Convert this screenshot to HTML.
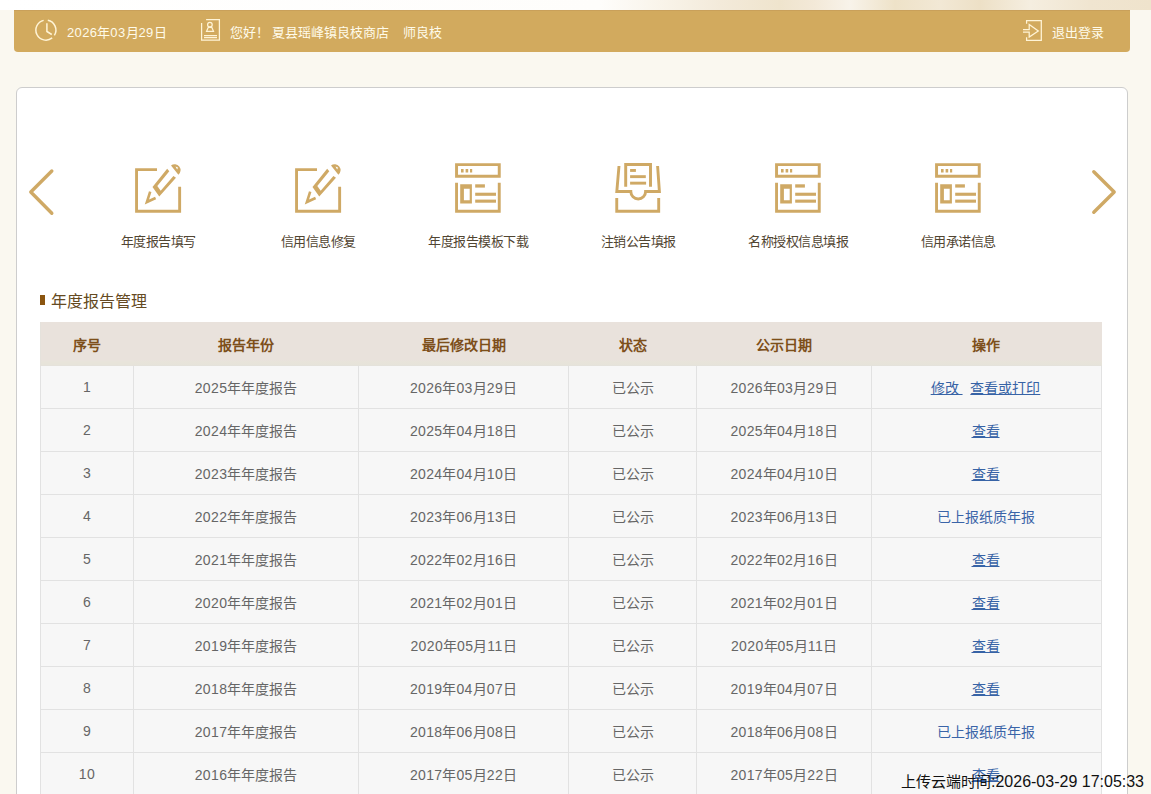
<!DOCTYPE html>
<html lang="zh-CN">
<head>
<meta charset="utf-8">
<style>
*{margin:0;padding:0;box-sizing:border-box;}
html,body{width:1151px;height:794px;overflow:hidden;}
body{position:relative;background:#faf8f0;font-family:"Liberation Sans",sans-serif;}
.topstrip{position:absolute;left:0;top:0;width:1151px;height:10px;background:linear-gradient(90deg,#ffffff 0px,#fefdfb 600px,#f9f4ea 660px,#f3eada 720px,#efe4cd 780px,#f3e9d8 815px,#f8f3ea 850px,#eee2c8 895px,#f2e8d5 940px,#ede0c6 980px,#f5eee0 1030px,#f0e5d0 1090px,#efe3cc 1151px);}
.bar{position:absolute;left:14px;top:10px;width:1116px;height:42px;background:#d2aa5e;border-radius:0 0 4px 4px;box-shadow:inset 0 1px 0 #c9a05a;}
.bar .t{position:absolute;top:2px;height:42px;line-height:42px;color:#fffbea;font-size:13px;font-weight:500;white-space:nowrap;}
.panel{position:absolute;left:16px;top:87px;width:1112px;height:800px;background:#fff;border:1px solid #cdcdcd;border-radius:6px;}
.lbl{position:absolute;top:230.5px;width:160px;text-align:center;font-size:13px;letter-spacing:-0.5px;text-indent:0.5px;color:#514532;white-space:nowrap;}
.sec{position:absolute;left:40px;top:295px;width:5px;height:10px;background:#8b5510;}
.sectitle{position:absolute;left:51px;top:287.5px;font-size:16px;color:#654a22;white-space:nowrap;}
table{position:absolute;left:40px;top:322px;width:1061px;border-collapse:collapse;table-layout:fixed;}
th{height:44px;background:linear-gradient(to bottom,#e9e2dc 0px,#e9e2dc 38px,#e8e4da 40px,#e6e3da 43px,#e3e1dc 44px);color:#7d4f1a;font-weight:bold;font-size:14px;text-align:center;border:none;}
td{height:43px;background:#f7f7f7;color:#666;font-size:14px;text-align:center;border:1px solid #e2e2e2;}
tr.r1 td{border-top:0;height:42px;}
th:last-child,td:last-child{padding-right:2px;}
th:first-child{border-left:1px solid #e5e2dc;}
td a{color:#3763a6;text-decoration:underline;}
td span.b{color:#3a64a8;}
.wm{position:absolute;left:901px;top:770px;font-size:16px;color:#111;white-space:nowrap;}
i.d{font-style:normal;letter-spacing:.35px;}
svg.ov{position:absolute;left:0;top:0;}
</style>
</head>
<body>
<div class="topstrip"></div>
<div class="bar"></div>
<div class="bar" style="background:none;box-shadow:none">
  <span class="t" style="left:53px"><i class="d">2026</i>年<i class="d">03</i>月<i class="d">29</i>日</span>
  <span class="t" style="left:216px">您好！</span>
  <span class="t" style="left:258px">夏县瑶峰镇良枝商店</span>
  <span class="t" style="left:389px">师良枝</span>
  <span class="t" style="left:1038px">退出登录</span>
</div>
<div class="panel"></div>

<div class="lbl" style="left:78px">年度报告填写</div>
<div class="lbl" style="left:238px">信用信息修复</div>
<div class="lbl" style="left:398px">年度报告模板下载</div>
<div class="lbl" style="left:558px">注销公告填报</div>
<div class="lbl" style="left:718px">名称授权信息填报</div>
<div class="lbl" style="left:878px">信用承诺信息</div>

<div class="sec"></div>
<div class="sectitle">年度报告管理</div>

<table>
<colgroup><col style="width:93px"><col style="width:225px"><col style="width:210px"><col style="width:128px"><col style="width:175px"><col style="width:230px"></colgroup>
<tr><th>序号</th><th>报告年份</th><th>最后修改日期</th><th>状态</th><th>公示日期</th><th>操作</th></tr>
<tr class="r1"><td><i class="d">1</i></td><td><i class="d">2025</i>年年度报告</td><td><i class="d">2026</i>年<i class="d">03</i>月<i class="d">29</i>日</td><td>已公示</td><td><i class="d">2026</i>年<i class="d">03</i>月<i class="d">29</i>日</td><td><a>修改 </a>&nbsp;&nbsp;<a>查看或打印</a></td></tr>
<tr><td><i class="d">2</i></td><td><i class="d">2024</i>年年度报告</td><td><i class="d">2025</i>年<i class="d">04</i>月<i class="d">18</i>日</td><td>已公示</td><td><i class="d">2025</i>年<i class="d">04</i>月<i class="d">18</i>日</td><td><a>查看</a></td></tr>
<tr><td><i class="d">3</i></td><td><i class="d">2023</i>年年度报告</td><td><i class="d">2024</i>年<i class="d">04</i>月<i class="d">10</i>日</td><td>已公示</td><td><i class="d">2024</i>年<i class="d">04</i>月<i class="d">10</i>日</td><td><a>查看</a></td></tr>
<tr><td><i class="d">4</i></td><td><i class="d">2022</i>年年度报告</td><td><i class="d">2023</i>年<i class="d">06</i>月<i class="d">13</i>日</td><td>已公示</td><td><i class="d">2023</i>年<i class="d">06</i>月<i class="d">13</i>日</td><td><span class="b">已上报纸质年报</span></td></tr>
<tr><td><i class="d">5</i></td><td><i class="d">2021</i>年年度报告</td><td><i class="d">2022</i>年<i class="d">02</i>月<i class="d">16</i>日</td><td>已公示</td><td><i class="d">2022</i>年<i class="d">02</i>月<i class="d">16</i>日</td><td><a>查看</a></td></tr>
<tr><td><i class="d">6</i></td><td><i class="d">2020</i>年年度报告</td><td><i class="d">2021</i>年<i class="d">02</i>月<i class="d">01</i>日</td><td>已公示</td><td><i class="d">2021</i>年<i class="d">02</i>月<i class="d">01</i>日</td><td><a>查看</a></td></tr>
<tr><td><i class="d">7</i></td><td><i class="d">2019</i>年年度报告</td><td><i class="d">2020</i>年<i class="d">05</i>月<i class="d">11</i>日</td><td>已公示</td><td><i class="d">2020</i>年<i class="d">05</i>月<i class="d">11</i>日</td><td><a>查看</a></td></tr>
<tr><td><i class="d">8</i></td><td><i class="d">2018</i>年年度报告</td><td><i class="d">2019</i>年<i class="d">04</i>月<i class="d">07</i>日</td><td>已公示</td><td><i class="d">2019</i>年<i class="d">04</i>月<i class="d">07</i>日</td><td><a>查看</a></td></tr>
<tr><td><i class="d">9</i></td><td><i class="d">2017</i>年年度报告</td><td><i class="d">2018</i>年<i class="d">06</i>月<i class="d">08</i>日</td><td>已公示</td><td><i class="d">2018</i>年<i class="d">06</i>月<i class="d">08</i>日</td><td><span class="b">已上报纸质年报</span></td></tr>
<tr><td><i class="d">10</i></td><td><i class="d">2016</i>年年度报告</td><td><i class="d">2017</i>年<i class="d">05</i>月<i class="d">22</i>日</td><td>已公示</td><td><i class="d">2017</i>年<i class="d">05</i>月<i class="d">22</i>日</td><td><a>查看</a></td></tr>
</table>

<svg class="ov" width="1151" height="794" viewBox="0 0 1151 794" fill="none" stroke-linecap="butt">
<g transform="translate(0 0)">
<path d="M157 169.65 H136.55 V211.25 H179.65 V186.8" stroke="#cfa965" stroke-width="2.9" fill="none"/>
<path d="M167.15 168.7 L152.5 186.9 L159.25 196.5 L176 177.8 L173.4 175.9 L160.7 190.7 L157.3 185.9 L169.3 171.3 Z" fill="#cfa965"/>
<path d="M171 165.6 A5.86 5.86 0 0 1 178.4 174.7 Z" fill="#cfa965"/>
<path d="M175.5 166.4 L178 167.6 L177.2 169.4 Z" fill="#fff"/>
<path d="M150.2 191.6 L146.9 202 L155.6 198" stroke="#cfa965" stroke-width="2.6" fill="none" stroke-linejoin="miter"/>
</g>
<g transform="translate(160 0)">
<path d="M157 169.65 H136.55 V211.25 H179.65 V186.8" stroke="#cfa965" stroke-width="2.9" fill="none"/>
<path d="M167.15 168.7 L152.5 186.9 L159.25 196.5 L176 177.8 L173.4 175.9 L160.7 190.7 L157.3 185.9 L169.3 171.3 Z" fill="#cfa965"/>
<path d="M171 165.6 A5.86 5.86 0 0 1 178.4 174.7 Z" fill="#cfa965"/>
<path d="M175.5 166.4 L178 167.6 L177.2 169.4 Z" fill="#fff"/>
<path d="M150.2 191.6 L146.9 202 L155.6 198" stroke="#cfa965" stroke-width="2.6" fill="none" stroke-linejoin="miter"/>
</g>
<g transform="translate(0 0)">
<path d="M456.55 164.6 H499.25 V176.25 H456.55 Z" stroke="#cfa965" stroke-width="2.95" fill="none"/>
<rect x="461" y="169" width="2.6" height="3.5" fill="#cfa965"/>
<rect x="465.6" y="169" width="2.6" height="3.5" fill="#cfa965"/>
<rect x="470" y="169" width="2.2" height="3.5" fill="#cfa965"/>
<path d="M456.55 182.8 V211.25 H499.25 V182.8" stroke="#cfa965" stroke-width="2.9" fill="none"/>
<path d="M460.2 184.3 H471.9 V203.6 H460.2 Z M463.9 188.7 V200.3 H469.7 V188.7 Z" fill="#cfa965" fill-rule="evenodd"/>
<rect x="475.2" y="184.3" width="9.7" height="3.3" fill="#cfa965"/>
<rect x="475.2" y="192.7" width="20.8" height="3.1" fill="#cfa965"/>
<rect x="475.2" y="199.6" width="20.8" height="3.1" fill="#cfa965"/>
</g>
<g>
<path d="M625.7 186.8 V164.55 H650.5 V186.8" stroke="#cfa965" stroke-width="2.95" fill="none"/>
<rect x="630.1" y="169" width="5.8" height="2.9" fill="#cfa965"/>
<rect x="630.1" y="175.2" width="15.7" height="2.9" fill="#cfa965"/>
<rect x="630.1" y="181.7" width="16" height="2.9" fill="#cfa965"/>
<path d="M619 166 L616.8 191.55 H630.8 A7.4 7.4 0 0 0 645.6 191.55 H659.4 L657.6 166" stroke="#cfa965" stroke-width="2.9" fill="none"/>
<path d="M616.75 198.1 V211.25 H658.7 V198.1" stroke="#cfa965" stroke-width="2.9" fill="none"/>
</g>
<g transform="translate(320 0)">
<path d="M456.55 164.6 H499.25 V176.25 H456.55 Z" stroke="#cfa965" stroke-width="2.95" fill="none"/>
<rect x="461" y="169" width="2.6" height="3.5" fill="#cfa965"/>
<rect x="465.6" y="169" width="2.6" height="3.5" fill="#cfa965"/>
<rect x="470" y="169" width="2.2" height="3.5" fill="#cfa965"/>
<path d="M456.55 182.8 V211.25 H499.25 V182.8" stroke="#cfa965" stroke-width="2.9" fill="none"/>
<path d="M460.2 184.3 H471.9 V203.6 H460.2 Z M463.9 188.7 V200.3 H469.7 V188.7 Z" fill="#cfa965" fill-rule="evenodd"/>
<rect x="475.2" y="184.3" width="9.7" height="3.3" fill="#cfa965"/>
<rect x="475.2" y="192.7" width="20.8" height="3.1" fill="#cfa965"/>
<rect x="475.2" y="199.6" width="20.8" height="3.1" fill="#cfa965"/>
</g>
<g transform="translate(480 0)">
<path d="M456.55 164.6 H499.25 V176.25 H456.55 Z" stroke="#cfa965" stroke-width="2.95" fill="none"/>
<rect x="461" y="169" width="2.6" height="3.5" fill="#cfa965"/>
<rect x="465.6" y="169" width="2.6" height="3.5" fill="#cfa965"/>
<rect x="470" y="169" width="2.2" height="3.5" fill="#cfa965"/>
<path d="M456.55 182.8 V211.25 H499.25 V182.8" stroke="#cfa965" stroke-width="2.9" fill="none"/>
<path d="M460.2 184.3 H471.9 V203.6 H460.2 Z M463.9 188.7 V200.3 H469.7 V188.7 Z" fill="#cfa965" fill-rule="evenodd"/>
<rect x="475.2" y="184.3" width="9.7" height="3.3" fill="#cfa965"/>
<rect x="475.2" y="192.7" width="20.8" height="3.1" fill="#cfa965"/>
<rect x="475.2" y="199.6" width="20.8" height="3.1" fill="#cfa965"/>
</g>
<path d="M51.8 171 L30.8 192 L51.8 213.2" stroke="#cfa965" stroke-width="3.4" stroke-linecap="round" stroke-linejoin="round" fill="none"/>
<path d="M1093.8 171.8 L1114.2 192 L1093.8 212.3" stroke="#cfa965" stroke-width="3.4" stroke-linecap="round" stroke-linejoin="round" fill="none"/>
<g stroke="#fff4d6" fill="none" stroke-width="1.5">
<path d="M47.81 20.28 A10 10 0 0 1 54.38 35.40"/>
<path d="M52.19 37.87 A10 10 0 1 1 43.65 20.36"/>
<path d="M46.9 23.3 V31.5 L51.8 34.5"/>
</g>
<g stroke="#fff4d6" fill="none" stroke-width="1.25">
<path d="M206.1 19.6 H219.4 V40.2 H201.6 V22.9"/>
<circle cx="209.9" cy="24.65" r="2.3"/>
<path d="M206.6 31.3 L208.3 27.3 H211.8 L213.5 31.3 Z"/>
<path d="M204 35.5 H217 M204 37.5 H217"/>
</g>
<g stroke="#fff4d6" fill="none" stroke-width="1.25">
<path d="M1026.6 23.8 V20.7 H1041.3 V40.3 H1026.6 V37.2"/>
<path d="M1023 29.6 H1029.2 V24.5 L1038.3 30.9 L1029.2 37 V32.2 H1023"/>
</g>
</svg>

<div class="wm"><span style="font-size:15px">上传云端时间</span>:2026-03-29 17:05:33</div>
</body>
</html>
